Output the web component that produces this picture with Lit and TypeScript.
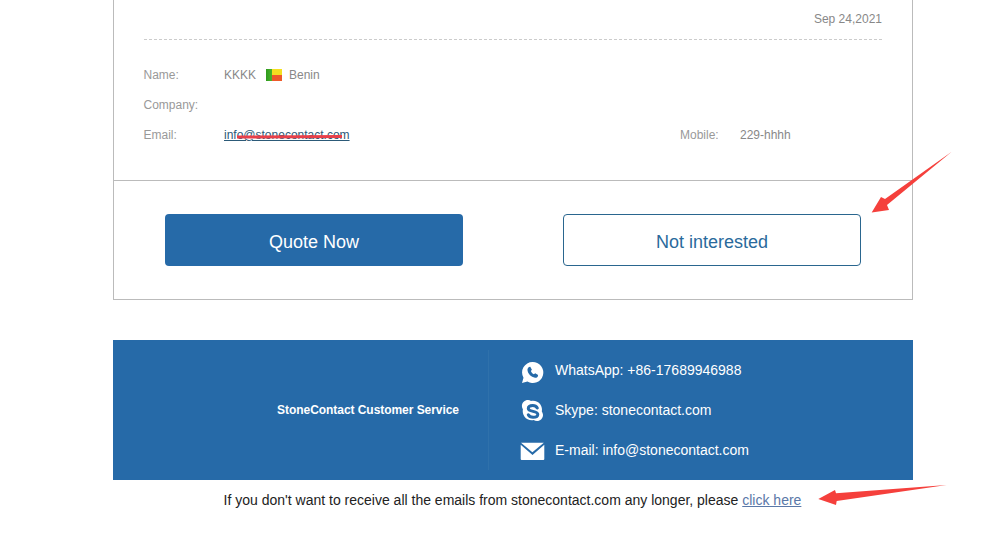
import { LitElement, html, css, svg } from "lit";
import { customElement } from "lit/decorators.js";

@customElement("app-root")
export class AppRoot extends LitElement {
  static styles = css`
    :host { display: block; position: relative; width: 995px; height: 539px; overflow: hidden; background: #fff; font-family: "Liberation Sans", Arial, sans-serif; }
    .wrap { width: 800px; margin-left: 113px; }
    .card { box-sizing: border-box; height: 300px; border: 1px solid #bbb; border-top: 0; display: flex; flex-direction: column; }
    .info { height: 181px; box-sizing: border-box; padding: 0 30px; border-bottom: 1px solid #bbb; }
    .date { height: 40px; padding-top: 12px; box-sizing: border-box; text-align: right; font-size: 12px; line-height: 14px; color: #888; border-bottom: 1px dashed #ccc; }
    .rows { padding-top: 20px; }
    .row { display: flex; height: 30px; align-items: center; font-size: 12px; color: #888; }
    .label { width: 80px; color: #999; margin-left: -0.5px; padding-right: 0.5px; }
    .flag { display: inline-grid; grid-template-columns: 6px 10px; grid-template-rows: 6px 6px; width: 16px; height: 12px; margin: 0 7px 0 10px; }
    .g { grid-row: 1 / 3; background: linear-gradient(90deg, #2f9a1e, #4ab52c); }
    .y { background: #f4e020; }
    .r { background: #ee5a2a; }
    .mail { color: #2c5a78; text-decoration: underline; width: 456px; }
    .mlabel { width: 60px; color: #999; }
    .actions { flex: 1; display: flex; justify-content: center; align-items: center; gap: 100px; }
    .btn { box-sizing: border-box; width: 298px; height: 52px; padding-top: 4px; border-radius: 4px; display: flex; align-items: center; justify-content: center; font-size: 18px; }
    .primary { background: #266aa8; color: #fff; }
    .outline { border: 1px solid #2a668f; color: #2a6a9c; background: #fff; }
    .banner { margin-top: 40px; height: 140px; background: #266aa8; display: flex; align-items: center; color: #fff; }
    .title { box-sizing: border-box; width: 376px; height: 120px; border-right: 1px solid #2f71ab; padding-right: 29px; display: flex; align-items: center; justify-content: flex-end; font-size: 12px; font-weight: bold; letter-spacing: -0.05px; }
    .contacts { display: flex; flex-direction: column; padding-left: 30px; }
    .contact { display: flex; align-items: center; height: 40px; font-size: 14px; gap: 10px; }
    .contact svg { width: 26px; height: 26px; display: block; }
    .foot { height: 40px; display: flex; align-items: center; justify-content: center; padding-right: 1px; font-size: 14px; color: #222; white-space: pre; }
    .foot a { color: #5a78a8; text-decoration: underline; }
    .anno { position: absolute; left: 0; top: 0; width: 995px; height: 539px; pointer-events: none; }
  `;

  render() {
    return html`
      <div class="wrap">
        <div class="card">
          <div class="info">
            <div class="date">Sep 24,2021</div>
            <div class="rows">
              <div class="row"><span class="label">Name:</span>KKKK<span class="flag"><i class="g"></i><i class="y"></i><i class="r"></i></span>Benin</div>
              <div class="row"><span class="label">Company:</span></div>
              <div class="row"><span class="label">Email:</span><span class="mail">info@stonecontact.com</span><span class="mlabel">Mobile:</span>229-hhhh</div>
            </div>
          </div>
          <div class="actions">
            <div class="btn primary">Quote Now</div>
            <div class="btn outline">Not interested</div>
          </div>
        </div>
        <div class="banner">
          <div class="title">StoneContact Customer Service</div>
          <div class="contacts">
            <div class="contact">
              <svg viewBox="0 0 26 26"><g transform="translate(0 2.500)"><path fill="#fff" d="M13.500 2.500a10.500 10.500 0 0 0-9 15.800L3 23.500l5.400-1.500A10.500 10.500 0 1 0 13.500 2.500z"/><path fill="#266aa8" d="M9.900 7.500l1.400-.3 1.600 3-1 1.300c.5 1.500 1.600 2.600 3 3.300l1.300-1 2.900 1.700-.3 1.400c-.5 1.100-1.600 1.600-2.800 1.400-4-.8-6.900-3.700-7.500-7.500-.2-1.300.4-2.400 1.400-3.300z"/></g></svg>
              <span>WhatsApp: +86-17689946988</span>
            </div>
            <div class="contact">
              <svg viewBox="0 0 26 26"><path fill="#fff" d="M9 3c1.200 0 2.200.3 3 .9 3.500-.7 7.300.4 9.400 3.500 1.400 2.100 1.900 4.600 1.400 7 .6 1 1.200 2.200 1.200 3.600 0 3.300-2.500 6-6 6-1.300 0-2.400-.4-3.300-1-3.600.7-7.200-.5-9.300-3.600-1.500-2.100-2-4.600-1.500-7.100-.6-1-1-2.100-1-3.300C3 5.500 5.700 3 9 3z"/><path fill="none" stroke="#266aa8" stroke-width="3" stroke-linecap="round" d="M18.300 10.900c-.8-1.400-2.500-2.400-4.500-2.400-2.500 0-4.500 1.100-4.500 3 0 3.800 9.500 1.900 9.500 5.700 0 1.900-2.100 3-4.700 3-2.200 0-4-.9-4.800-2.400"/></svg>
              <span>Skype: stonecontact.com</span>
            </div>
            <div class="contact">
              <svg viewBox="0 0 26 26"><path fill="#fff" d="M2 5.700h22.800L13.400 15.200z"/><path fill="#fff" d="M1.700 7.800v14.200q0 1 1 1h21.600q1 0 1-1V7.800L13.500 18z"/></svg>
              <span>E-mail: info@stonecontact.com</span>
            </div>
          </div>
        </div>
        <div class="foot">If you don't want to receive all the emails from stonecontact.com any longer, please <a>click here</a></div>
      </div>
      <svg class="anno" viewBox="0 0 995 539">
        ${svg`
          <path fill="#e8404a" d="M237 135.500 L342 135 L342 138 L237 138.500 Z"/>
          <path fill="#f5403c" d="M951.700 151.700 L887 205 L889 210 L871.700 212.500 L881 197 L885 199 Z"/>
          <path fill="#f5403c" d="M946.700 485 L836 493.300 L835 490 L818.300 499 L836 505 L836.700 501 Z"/>
        `}
      </svg>
    `;
  }
}
